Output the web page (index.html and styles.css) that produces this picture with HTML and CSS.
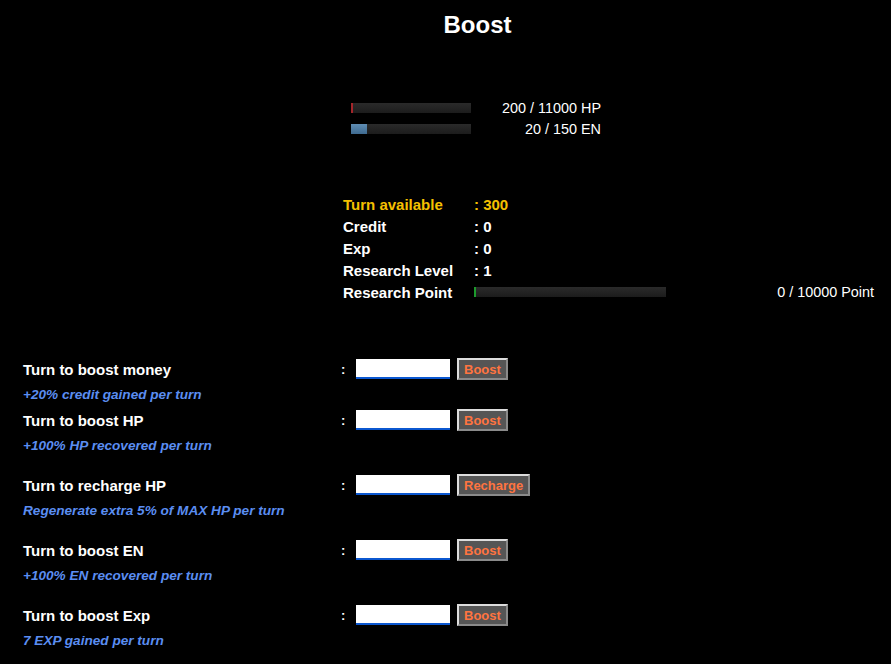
FILE: index.html
```html
<!DOCTYPE html>
<html lang="en">
<head>
    <meta charset="UTF-8">
    <title>Boost</title>
    <link rel="stylesheet" href="styles.css">
</head>
<body>
    <h1 class="page-title">Boost</h1>

    <div class="gauges">
        <div class="gauge-row">
            <div class="gauge"><div class="gauge-fill hp" style="width: 1%"></div></div>
            <span class="gauge-text">200 / 11000 HP</span>
        </div>
        <div class="gauge-row">
            <div class="gauge"><div class="gauge-fill en" style="width: 13%"></div></div>
            <span class="gauge-text">20 / 150 EN</span>
        </div>
    </div>

    <div class="stats">
        <span class="stat-label gold">Turn available</span><span class="stat-value gold">: 300</span>
        <span class="stat-label">Credit</span><span class="stat-value">: 0</span>
        <span class="stat-label">Exp</span><span class="stat-value">: 0</span>
        <span class="stat-label">Research Level</span><span class="stat-value">: 1</span>
        <span class="stat-label">Research Point</span>
        <div class="research">
            <div class="research-bar"><div class="research-fill" style="width: 1%"></div></div>
            <span class="research-text">0 / 10000 Point</span>
        </div>
    </div>

    <div class="boosts">
        <div class="boost first">
            <div class="boost-row">
                <span class="boost-label">Turn to boost money</span>
                <span class="colon">:</span>
                <input class="turn-input" type="text">
                <button class="boost-btn">Boost</button>
            </div>
            <div class="boost-desc">+20% credit gained per turn</div>
        </div>
        <div class="boost second">
            <div class="boost-row">
                <span class="boost-label">Turn to boost HP</span>
                <span class="colon">:</span>
                <input class="turn-input" type="text">
                <button class="boost-btn">Boost</button>
            </div>
            <div class="boost-desc">+100% HP recovered per turn</div>
        </div>
        <div class="boost">
            <div class="boost-row">
                <span class="boost-label">Turn to recharge HP</span>
                <span class="colon">:</span>
                <input class="turn-input" type="text">
                <button class="boost-btn">Recharge</button>
            </div>
            <div class="boost-desc">Regenerate extra 5% of MAX HP per turn</div>
        </div>
        <div class="boost">
            <div class="boost-row">
                <span class="boost-label">Turn to boost EN</span>
                <span class="colon">:</span>
                <input class="turn-input" type="text">
                <button class="boost-btn">Boost</button>
            </div>
            <div class="boost-desc">+100% EN recovered per turn</div>
        </div>
        <div class="boost">
            <div class="boost-row">
                <span class="boost-label">Turn to boost Exp</span>
                <span class="colon">:</span>
                <input class="turn-input" type="text">
                <button class="boost-btn">Boost</button>
            </div>
            <div class="boost-desc">7 EXP gained per turn</div>
        </div>
    </div>
</body>
</html>
```

FILE: styles.css
```css
body {
    margin: 0;
    background: #000;
    color: #fff;
    font-family: "Liberation Sans", Arial, sans-serif;
    font-size: 14px;
    height: 664px;
    overflow: hidden;
}
.page-title {
    margin: 0 0 0 64px;
    padding-top: 11px;
    text-align: center;
    font-size: 24px;
    line-height: 28px;
    font-weight: bold;
}

/* HP / EN */
.gauges {
    width: 250px;
    margin: 58px 0 0 351px;
}
.gauge-row {
    display: flex;
    align-items: center;
    justify-content: space-between;
    height: 21px;
}
.gauge {
    width: 120px;
    height: 10px;
    background: linear-gradient(#2a2a2a, #1c1c1c);
}
.gauge-fill {
    height: 100%;
}
.gauge-fill.hp {
    background: #a3252a;
    min-width: 2px;
}
.gauge-fill.en {
    background: linear-gradient(#5f8db3, #3f6a90);
}
.gauge-text {
    font-size: 14.4px;
}

/* stats */
.stats {
    display: grid;
    grid-template-columns: 131px 1fr;
    grid-auto-rows: 22px;
    align-items: center;
    margin: 54px 17px 0 343px;
    font-size: 15px;
    font-weight: bold;
}
.gold {
    color: #f5c000;
}
.research {
    display: flex;
    align-items: center;
    justify-content: space-between;
}
.research-bar {
    width: 192px;
    height: 10px;
    background: linear-gradient(#2a2a2a, #1c1c1c);
}
.research-fill {
    height: 100%;
    min-width: 2px;
    background: #1c9a2c;
}
.research-text {
    font-size: 14.4px;
    font-weight: normal;
}

/* boost rows */
.boosts {
    margin: 53px 0 0 23px;
}
.boost {
    margin-top: 17px;
}
.boost.first {
    margin-top: 0;
}
.boost.second {
    margin-top: 3px;
}
.boost-row {
    display: flex;
    align-items: center;
    height: 24px;
    padding-top: 1px;
}
.boost-label {
    width: 320px;
    font-size: 15px;
    font-weight: bold;
}
.colon {
    width: 13px;
    margin-left: -2px;
    padding-right: 2px;
    font-size: 13px;
    font-weight: bold;
}
.turn-input {
    box-sizing: border-box;
    width: 94px;
    height: 20px;
    margin: 0;
    padding: 0 3px;
    border: none;
    border-bottom: 2px solid #0b57d0;
    background: #fff;
    outline: none;
}
.boost-btn {
    box-sizing: border-box;
    height: 22px;
    margin-left: 7px;
    padding: 0 5px;
    background: #555;
    color: #ff7440;
    font-family: "Liberation Sans", Arial, sans-serif;
    font-size: 13px;
    font-weight: bold;
    border: 2px solid;
    border-color: #ddd #8a8a8a #8a8a8a #ddd;
    cursor: pointer;
}
.boost-desc {
    margin-top: 5px;
    line-height: 18px;
    color: #5b8ef2;
    font-size: 13.6px;
    font-weight: bold;
    font-style: italic;
}
```
